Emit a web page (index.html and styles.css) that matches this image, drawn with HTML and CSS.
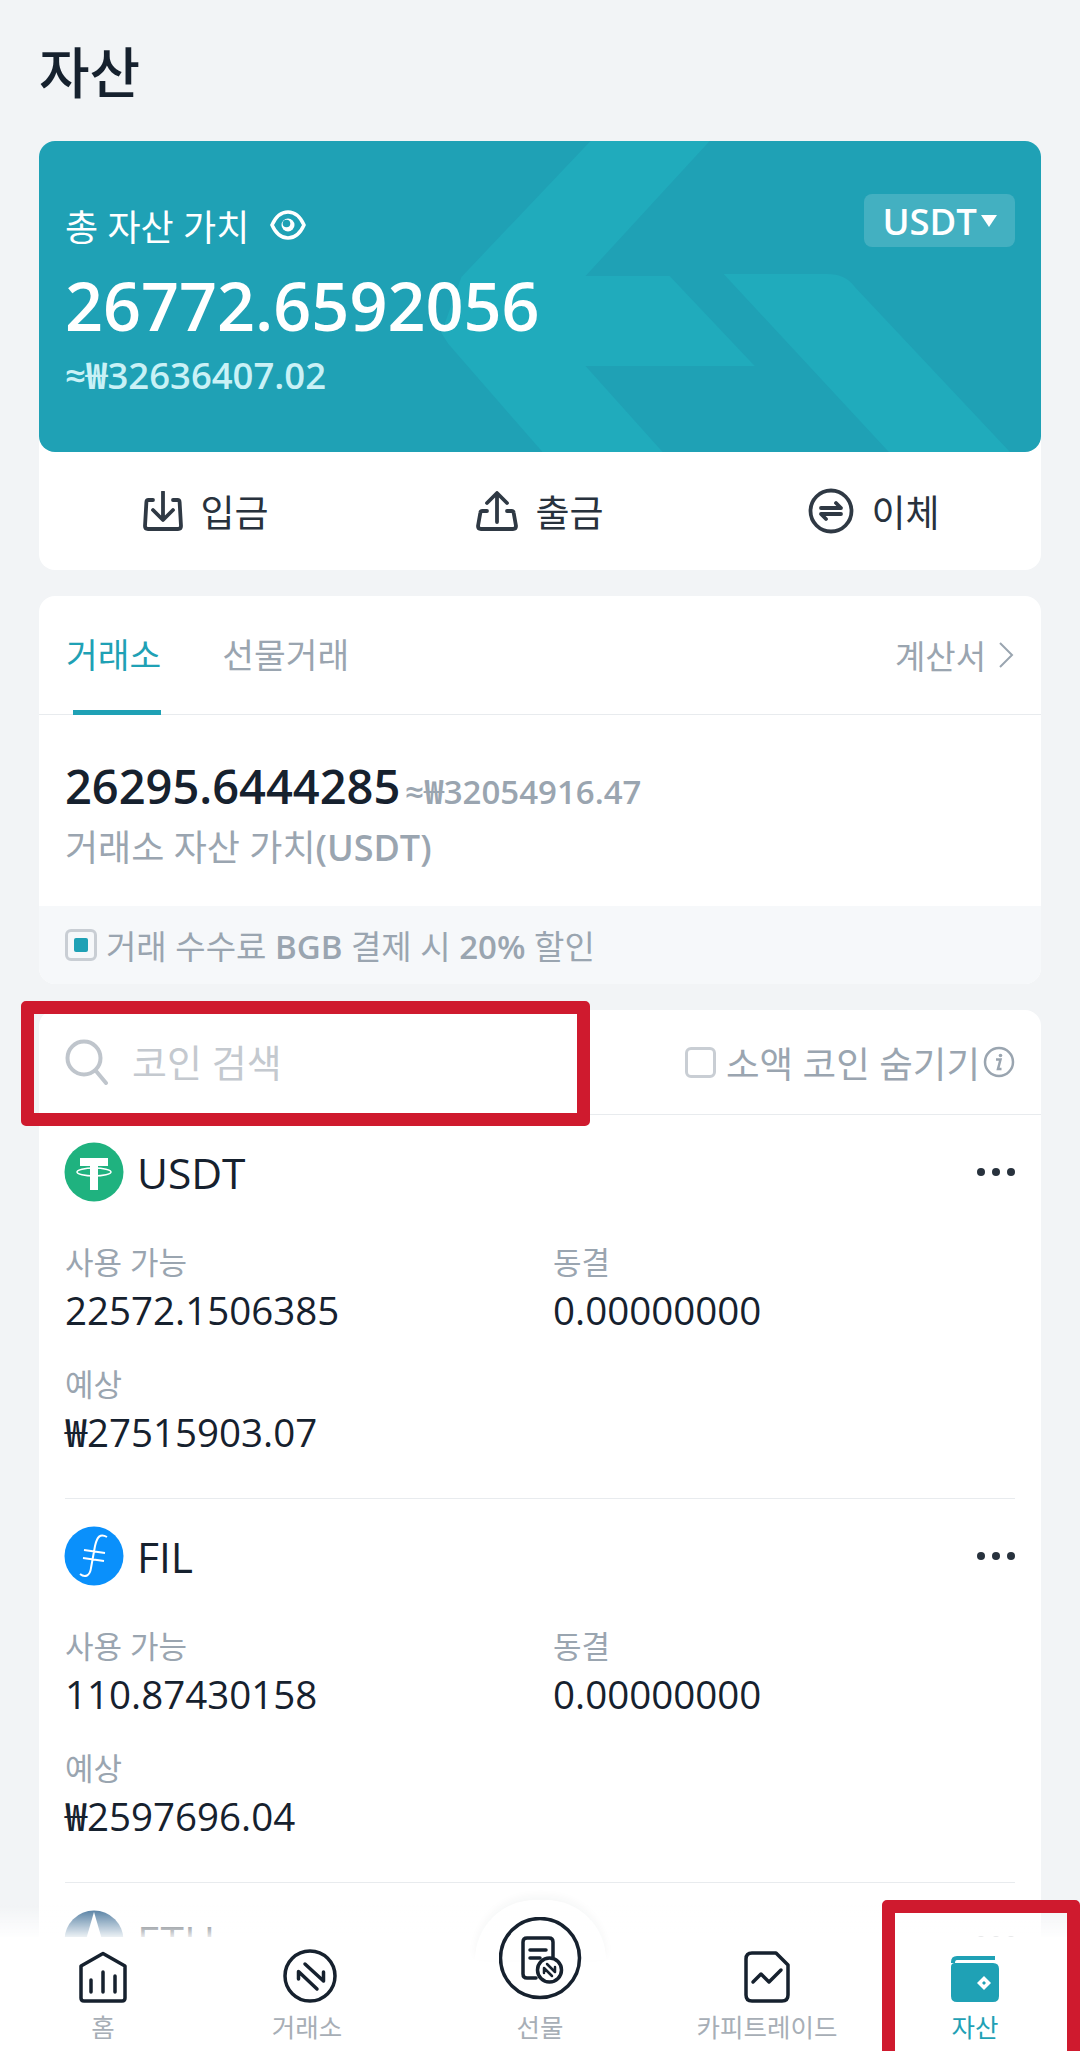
FILE: index.html
```html
<!DOCTYPE html>
<html lang="ko">
<head>
    <meta charset="UTF-8">
    <title>자산</title>
    <link rel="stylesheet" href="styles.css">
</head>
<body>
    <div class="page">
        <h1 class="title">자산</h1>

        <div class="assets">
            <div class="hero">
                <svg class="hero-bg" viewBox="0 0 1001 311" preserveAspectRatio="none">
                    <path d="M551 0H670L546 135H630L715 225H546L623 311H503L409 203L402 192L422 136Z"/>
                    <path d="M684 133H787Q806 133 815 146L970 311H849Z"/>
                </svg>
                <div class="hero-label">
                    <span>총 자산 가치</span>
                    <svg class="eye" viewBox="0 0 36 30"><path class="eye-lens" d="M2 15C6 6 12 2 18 2s12 4 16 13c-4 9-10 13-16 13S6 24 2 15Z"/><circle class="eye-ball" cx="18" cy="15" r="6.500"/><circle class="eye-notch" cx="16.500" cy="13.500" r="3.800"/></svg>
                </div>
                <div class="hero-num">26772.6592056</div>
                <div class="hero-sub">≈₩32636407.02</div>
                <div class="unit">USDT<i class="unit-arrow"></i></div>
            </div>
            <div class="actions">
                <div class="action">
                    <svg width="40" height="40" viewBox="0 0 40 40"><path class="ic" d="M10 9H5.500Q3.500 9 3.400 11L2 35Q2 38 5 38H35Q38 38 38 35L36.600 11Q36.500 9 34.500 9H30"/><path class="ic" d="M20 1V28M10 19L20 29L30 19"/></svg>
                    <span>입금</span>
                </div>
                <div class="action">
                    <svg width="42" height="40" viewBox="0 0 42 40"><path class="ic" d="M11 20H6.500Q4.500 20 4.300 22L2 35Q2 38 5 38H37Q40 38 40 35L37.700 22Q37.500 20 35.500 20H31"/><path class="ic" d="M21 31V3M11 12L21 2L31 12"/></svg>
                    <span>출금</span>
                </div>
                <div class="action">
                    <svg width="46" height="46" viewBox="0 0 46 46"><circle class="ic" cx="23" cy="23" r="20.500"/><path class="ic" d="M13 20H33L28 15M33 26H13L18 31"/></svg>
                    <span>이체</span>
                </div>
            </div>
        </div>

        <div class="panel">
            <div class="tabs">
                <div class="tab active">거래소</div>
                <div class="tab">선물거래</div>
                <div class="tab-link">계산서<svg width="16" height="28" viewBox="0 0 16 28"><path d="M2 2L14 14L2 26"/></svg></div>
            </div>
            <div class="balance">
                <div class="balance-line"><span class="balance-num">26295.6444285</span><span class="balance-sub">≈₩32054916.47</span></div>
                <div class="balance-label">거래소 자산 가치<b>(USDT)</b></div>
            </div>
            <div class="fee">
                <span class="fee-check"><i></i></span>
                <span>거래 수수료 <b>BGB</b> 결제 시 <b>20%</b> 할인</span>
            </div>
        </div>

        <div class="panel coins">
            <div class="toolbar">
                <div class="search">
                    <svg width="44" height="46" viewBox="0 0 44 46"><circle cx="19" cy="19" r="16.500"/><path d="M31 32L41 44"/></svg>
                    <span>코인 검색</span>
                </div>
                <div class="hide-small">
                    <span class="check"></span>
                    <span>소액 코인 숨기기</span>
                    <svg class="info" width="32" height="32" viewBox="0 0 32 32"><circle cx="16" cy="16" r="14"/><path d="M13 13.500h4.500L15 23h3.500"/><circle class="dot" cx="17.500" cy="9.500" r="1.800"/></svg>
                </div>
                <div class="mark mark-search"></div>
            </div>

            <div class="coin">
                <div class="coin-head">
                    <svg class="coin-icon" viewBox="0 0 60 60"><circle cx="30" cy="30" r="29.500" fill="#1fb27f"/><path fill="#fff" d="M16 16H44V24H34V48H26V24H16Z"/><ellipse cx="30" cy="30" rx="17" ry="4" fill="none" stroke="#fff" stroke-width="1.500"/></svg>
                    <span class="coin-name">USDT</span>
                    <span class="more"><i></i><i></i><i></i></span>
                </div>
                <div class="stats">
                    <div class="stat"><div class="stat-label">사용 가능</div><div class="stat-value">22572.1506385</div></div>
                    <div class="stat"><div class="stat-label">동결</div><div class="stat-value">0.00000000</div></div>
                    <div class="stat"><div class="stat-label">예상</div><div class="stat-value">₩27515903.07</div></div>
                </div>
            </div>

            <div class="coin">
                <div class="coin-head">
                    <svg class="coin-icon" viewBox="0 0 60 60"><circle cx="30" cy="30" r="29.500" fill="#0a90fb"/><path fill="none" stroke="#fff" stroke-width="2" d="M43 11C36 7 33 11 31 20L27 42C26 50 21 52 16 48M20 24L41 27M19 32L40 35"/></svg>
                    <span class="coin-name">FIL</span>
                    <span class="more"><i></i><i></i><i></i></span>
                </div>
                <div class="stats">
                    <div class="stat"><div class="stat-label">사용 가능</div><div class="stat-value">110.87430158</div></div>
                    <div class="stat"><div class="stat-label">동결</div><div class="stat-value">0.00000000</div></div>
                    <div class="stat"><div class="stat-label">예상</div><div class="stat-value">₩2597696.04</div></div>
                </div>
            </div>

            <div class="coin">
                <div class="coin-head">
                    <svg class="coin-icon" viewBox="0 0 60 60"><circle cx="30" cy="30" r="29.500" fill="#3f6f97"/><path fill="#fff" d="M30 2L19 40H41Z"/></svg>
                    <span class="coin-name">ETH</span>
                    <span class="more"><i></i><i></i><i></i></span>
                </div>
            </div>
        </div>
    </div>

    <div class="nav">
        <div class="nav-fade"></div>
        <div class="nav-hump"></div>
        <div class="nav-item">
            <svg width="50" height="52" viewBox="0 0 50 52"><path class="nv" d="M25 2.500L47 15V47Q47 50 44 50H6Q3 50 3 47V15Z"/><path class="nv" d="M13 29V41M25 21V41M37 25V41"/></svg>
            <span>홈</span>
        </div>
        <div class="nav-item nav-trade">
            <svg width="54" height="54" viewBox="0 0 54 54"><circle class="nv" cx="27" cy="27" r="25"/><path class="nv" d="M15.500 30V22.500L34 40M22 15L40.500 32V23"/></svg>
            <span>거래소</span>
        </div>
        <div class="nav-item nav-center">
            <svg width="83" height="83" viewBox="0 0 83 83"><circle class="nv" cx="41" cy="41" r="39.500"/><path class="nv" d="M37 61H28Q24 61 24 57V25Q24 21 28 21H50Q54 21 54 25V40"/><path class="nv" d="M31 33H47M31 41H41"/><circle class="nv" cx="50.500" cy="53" r="12"/><path class="thin" d="M45 56V51L53 59M48 47L56 55V50"/></svg>
            <span>선물</span>
        </div>
        <div class="nav-item">
            <svg width="46" height="52" viewBox="0 0 46 52"><path class="nv" d="M8 2H32L44 14V44Q44 50 38 50H8Q2 50 2 44V8Q2 2 8 2Z"/><path class="nv" d="M9 31L17 23L25 31L37 19"/></svg>
            <span>카피트레이드</span>
        </div>
        <div class="nav-item nav-on">
            <svg width="48" height="48" viewBox="0 0 48 48"><path fill="#1fa1b5" d="M6 1H44V5H6Q4 5 4 8H0V7Q0 1 6 1Z"/><path fill="#1fa1b5" d="M0 12Q0 8 4 8H42Q48 8 48 14V41Q48 47 42 47H6Q0 47 0 41Z"/><path fill="#fff" d="M33 21L40 28L33 35L26 28Z"/><path fill="#1fa1b5" d="M33 26L35 28L33 30L31 28Z"/></svg>
            <span>자산</span>
            <div class="mark mark-nav"></div>
        </div>
    </div>
</body>
</html>
```

FILE: styles.css
```css
*{box-sizing:border-box;}
html,body{margin:0;padding:0;}
body{
    height: 2051px;
    overflow: hidden;
    background-color: #f2f4f6;
    color: #16212e;
    font-family: "Open Sans", "Noto Sans CJK KR", sans-serif;
}
i{display:block;}
.page{
    padding: 0 39px;
}
.title{
    margin: 0;
    height: 141px;
    padding: 36px 0 0 0;
    font-size: 55px;
    line-height: 72px;
    font-weight: 500;
}

/* total card */
.assets{
    height: 429px;
    background-color: #fff;
    border-radius: 16px;
}
.hero{
    position: relative;
    overflow: hidden;
    height: 311px;
    padding: 60px 26px 0;
    background-color: #1fa1b5;
    border-radius: 16px;
    color: #fff;
}
.hero-bg{
    position: absolute;
    top: 0;
    left: 0;
    width: 100%;
    height: 100%;
    fill: #20abbc;
}
.hero-label,.hero-num,.hero-sub{
    position: relative;
}
.hero-label{
    display: flex;
    align-items: center;
    gap: 21px;
    height: 48px;
    font-size: 36px;
}
.eye{
    width: 36px;
    height: 30px;
}
.eye-lens{
    fill: none;
    stroke: #fff;
    stroke-width: 3.5;
}
.eye-ball{
    fill: #fff;
}
.eye-notch{
    fill: #1fa1b5;
}
.hero-num{
    margin-top: 11px;
    font-size: 66.5px;
    line-height: 90px;
    font-weight: 600;
}
.hero-sub{
    margin-top: 2px;
    font-size: 36.5px;
    line-height: 46px;
    font-weight: 600;
    color: #c9f1f6;
}
.unit{
    position: absolute;
    top: 53px;
    right: 26px;
    display: flex;
    align-items: center;
    height: 53px;
    padding: 0 18px;
    gap: 4px;
    background-color: rgba(255,255,255,.16);
    border-radius: 8px;
    font-size: 36.5px;
    font-weight: 600;
}
.unit-arrow{
    width: 0;
    height: 0;
    border-left: 8px solid transparent;
    border-right: 8px solid transparent;
    border-top: 12px solid #fff;
}
.actions{
    display: grid;
    grid-template-columns: 1fr 1fr 1fr;
    height: 118px;
}
.action{
    display: flex;
    align-items: center;
    justify-content: center;
    gap: 17px;
    font-size: 37px;
    color: #28323d;
}
.ic{
    fill: none;
    stroke: #2f3944;
    stroke-width: 3.800;
    stroke-linecap: round;
    stroke-linejoin: round;
}

/* exchange panel */
.panel{
    margin-top: 26px;
    background-color: #fff;
    border-radius: 16px;
}
.tabs{
    display: flex;
    height: 119px;
    padding: 0 27px;
    border-bottom: 1px solid #e8ebee;
}
.tab{
    position: relative;
    margin-right: 61px;
    padding-top: 36px;
    font-size: 34.5px;
    line-height: 46px;
    color: #9aa5b0;
}
.tab.active{
    color: #1fa1b5;
}
.tab.active::after{
    content: "";
    position: absolute;
    bottom: -1px;
    left: 7px;
    right: 0;
    height: 5px;
    background-color: #1fa1b5;
}
.tab-link{
    display: flex;
    align-items: center;
    gap: 12px;
    height: 82px;
    padding-top: 36px;
    margin-left: auto;
    font-size: 33px;
    color: #9aa5b0;
}
.tab-link svg{
    fill: none;
    stroke: #9aa5b0;
    stroke-width: 2;
}
.balance{
    height: 191px;
    padding: 39px 26px 0;
}
.balance-line{
    display: flex;
    align-items: baseline;
    gap: 5px;
    height: 64px;
    line-height: 64px;
}
.balance-num{
    font-size: 47px;
    font-weight: 600;
}
.balance-sub{
    font-size: 33px;
    font-weight: 600;
    color: #9aa5b0;
}
.balance-label{
    padding-top: 1px;
    font-size: 36px;
    line-height: 58px;
    color: #9aa5b0;
}
.balance-label b{
    font-weight: 600;
}
.fee{
    display: flex;
    align-items: center;
    gap: 9px;
    height: 78px;
    padding: 0 26px;
    background-color: #f6f8fa;
    border-radius: 0 0 16px 16px;
    font-size: 33px;
    color: #9aa5b0;
}
.fee b{
    font-weight: 600;
}
.fee-check{
    display: flex;
    align-items: center;
    justify-content: center;
    width: 32px;
    height: 32px;
    border: 3px solid #c9ced4;
    border-radius: 6px;
}
.fee-check i{
    width: 14px;
    height: 14px;
    background-color: #1fa1b5;
    border-radius: 2px;
}

/* coin list */
.coins{
    height: 1100px;
}
.toolbar{
    position: relative;
    display: flex;
    align-items: center;
    justify-content: space-between;
    height: 105px;
    padding: 0 26px;
    border-bottom: 1px solid #e8ebee;
}
.search{
    display: flex;
    align-items: center;
    gap: 23px;
    font-size: 38px;
    color: #c4c9cf;
}
.search span{
    margin-top: -3px;
}
.search svg{
    fill: none;
    stroke: #bfc5cc;
    stroke-width: 4;
    stroke-linecap: round;
}
.hide-small{
    display: flex;
    align-items: center;
    font-size: 36.5px;
    color: #9aa5b0;
}
.check{
    width: 31px;
    height: 31px;
    margin-right: 10px;
    border: 3px solid #c9ced4;
    border-radius: 6px;
}
.info{
    margin-left: 3px;
    fill: none;
    stroke: #9aa5b0;
    stroke-width: 2.500;
}
.info .dot{
    fill: #9aa5b0;
    stroke: none;
}
.mark{
    position: absolute;
    border: 13px solid #cf1a2e;
    border-radius: 5px;
}
.mark-search{
    top: -9px;
    left: -18px;
    width: 569px;
    height: 125px;
}
.mark-nav{
    top: -37px;
    left: 20px;
    width: 198px;
    height: 170px;
}
.coin{
    margin: 0 26px;
    height: 384px;
    padding-top: 27px;
    border-bottom: 1px solid #e8ebee;
}
.coin-head{
    display: flex;
    align-items: center;
    height: 60px;
    margin-bottom: 38px;
}
.coin-icon{
    width: 60px;
    height: 60px;
    margin-left: -1px;
}
.coin-name{
    margin-left: 13px;
    font-size: 42.5px;
    font-weight: 500;
}
.more{
    display: flex;
    gap: 7px;
    margin-left: auto;
}
.more i{
    width: 8px;
    height: 8px;
    background-color: #28323d;
    border-radius: 50%;
}
.stats{
    display: grid;
    grid-template-columns: 488px 1fr;
    row-gap: 24px;
}
.stat-label{
    font-size: 31px;
    line-height: 44px;
    color: #9aa5b0;
}
.stat-value{
    font-size: 38.5px;
    font-weight: 500;
    line-height: 52px;
    padding-bottom: 2px;
}

/* bottom nav */
.nav{
    position: fixed;
    left: 0;
    bottom: 0;
    display: grid;
    grid-template-columns: 206px 202px 264px 190px 218px;
    width: 100%;
    height: 114px;
    background-color: #fff;
}
.nav-fade{
    position: absolute;
    top: -32px;
    left: 0;
    right: 0;
    height: 32px;
    background: linear-gradient(rgba(255,255,255,0), rgba(255,255,255,.9));
}
.nav-hump{
    position: absolute;
    top: -37px;
    left: 475px;
    width: 131px;
    height: 60px;
    background-color: #fff;
    border-radius: 66px 66px 0 0;
    box-shadow: 0 -4px 8px rgba(30,40,50,.04);
}
.nav-item{
    position: relative;
    display: flex;
    flex-direction: column;
    align-items: center;
    justify-content: flex-end;
    height: 114px;
    font-size: 25.5px;
    line-height: 48px;
    color: #a7aeb6;
}
.nav-item svg{
    flex-shrink: 0;
}
.nav-item span{
    display: block;
}
.nav-trade svg{
    margin-left: 5px;
}
.nav-center svg{
    margin-bottom: 3px;
}
.nav-on{
    padding-left: 8px;
    color: #1fa1b5;
}
.nv{
    fill: none;
    stroke: #16212e;
    stroke-width: 3.500;
    stroke-linecap: round;
    stroke-linejoin: round;
}
.thin{
    fill: none;
    stroke: #16212e;
    stroke-width: 2.500;
    stroke-linecap: round;
    stroke-linejoin: round;
}
```
